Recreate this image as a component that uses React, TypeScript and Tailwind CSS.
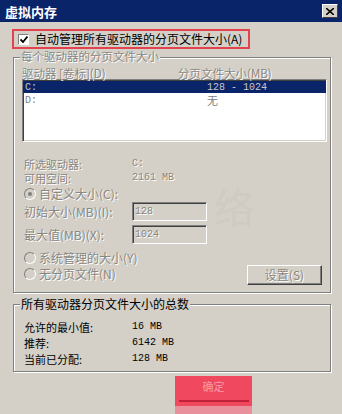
import React from "react";

const dim = "text-[#8a877f] [text-shadow:1px_1px_0_#fff]";
const sunken =
  "border border-t-[#808080] border-l-[#808080] border-b-white border-r-white shadow-[inset_1px_1px_0_#404040,inset_-1px_-1px_0_#d4d0c8]";

const Radio = ({ checked }: { checked?: boolean }) => (
  <span className="relative inline-block h-[12px] w-[12px] shrink-0 rounded-full border border-t-[#808080] border-l-[#808080] border-b-white border-r-white bg-[#d4d0c8]">
    {checked && (
      <span className="absolute left-[3px] top-[3px] h-[4px] w-[4px] rounded-full bg-[#808080]" />
    )}
  </span>
);

const Row = ({ label, value }: { label: string; value: string }) => (
  <div className="flex h-[12px] items-center leading-[12px]">
    <span className="w-[108px] text-[11px]">{label}</span>
    <span className="font-['Liberation_Mono',monospace] text-[10px]">{value}</span>
  </div>
);

const App = () => {
  return (
    <div className="relative h-[414px] w-[342px] overflow-hidden bg-[#d4d0c8] font-['Noto_Sans_CJK_SC',sans-serif] text-[12px] text-black">
      {/* title bar */}
      <div className="flex h-[22px] items-center justify-between bg-[#0a246a] pl-[5px] pr-[4px]">
        <span className="text-[13px] font-bold leading-none text-white">虚拟内存</span>
        <span className="flex h-[14px] w-[16px] items-center justify-center border border-t-white border-l-white border-b-[#404040] border-r-[#404040] bg-[#d4d0c8]">
          <svg width="8" height="7" viewBox="0 0 8 7">
            <path d="M0 0 L8 7 M8 0 L0 7" stroke="#000" strokeWidth="1.6" />
          </svg>
        </span>
      </div>

      {/* auto manage checkbox */}
      <div className="ml-[12px] mt-[7px] flex h-[20px] w-[238px] items-center border-2 border-[#e3434e] pl-[4px]">
        <span className="flex h-[11px] w-[11px] items-center justify-center border border-t-[#808080] border-l-[#808080] border-b-white border-r-white bg-white">
          <svg width="8" height="7" viewBox="0 0 8 7">
            <path d="M0.5 3.5 L3 6 L7.5 0.5" stroke="#000" strokeWidth="1.8" fill="none" />
          </svg>
        </span>
        <span className="ml-[6px] leading-[12px]">自动管理所有驱动器的分页文件大小(A)</span>
      </div>

      {/* per-drive group */}
      <div className="relative ml-[13px] mt-[8px] h-[236px] w-[318px] border border-[#808080] shadow-[inset_1px_1px_0_#fff,1px_1px_0_#fff]">
        <span className={`absolute -top-[8px] left-[6px] bg-[#d4d0c8] px-[1px] text-[11.5px] leading-[12px] ${dim}`}>
          每个驱动器的分页文件大小
        </span>
        <div className={`ml-[8px] mt-[9px] flex h-[12px] text-[11.5px] leading-[12px] ${dim}`}>
          <span className="w-[156px]">驱动器 [卷标](D)</span>
          <span>分页文件大小(MB)</span>
        </div>
        <div className={`ml-[8px] h-[63px] w-[305px] bg-white ${sunken}`}>
          <div className="mt-[1px] flex h-[12px] items-center bg-[#0a246a] font-['Liberation_Mono',monospace] text-[10px] text-[#c8c8c8]">
            <span className="ml-[2px] w-[182px]">C:</span>
            <span>128 - 1024</span>
          </div>
          <div className="mt-[1px] flex h-[12px] items-center text-[#808080]">
            <span className="ml-[2px] w-[182px] font-['Liberation_Mono',monospace] text-[10px]">D:</span>
            <span className="text-[11px] leading-[12px]">无</span>
          </div>
        </div>

        <div className={`ml-[10px] mt-[16px] flex flex-col gap-[2px] ${dim}`}>
          <Row label="所选驱动器:" value="C:" />
          <Row label="可用空间:" value="2161 MB" />
        </div>

        <div className={`ml-[10px] mt-[4px] flex h-[12px] items-center gap-[3px] leading-[12px] ${dim}`}>
          <Radio checked />
          <span>自定义大小(C):</span>
        </div>

        <div className={`ml-[10px] mt-[2px] flex h-[19px] items-center leading-[12px] ${dim}`}>
          <span className="w-[108px]">初始大小(MB)(I):</span>
          <span className={`flex h-[19px] w-[75px] items-center pl-[2px] font-['Liberation_Mono',monospace] text-[10px] ${sunken}`}>128</span>
        </div>
        <div className={`ml-[10px] mt-[4px] flex h-[19px] items-center leading-[12px] ${dim}`}>
          <span className="w-[108px]">最大值(MB)(X):</span>
          <span className={`flex h-[19px] w-[75px] items-center pl-[2px] font-['Liberation_Mono',monospace] text-[10px] ${sunken}`}>1024</span>
        </div>

        <div className="ml-[10px] mr-[8px] mt-[8px] flex justify-between">
          <div className={`flex flex-col gap-[4px] leading-[12px] ${dim}`}>
            <div className="flex h-[12px] items-center gap-[3px]">
              <Radio />
              <span>系统管理的大小(Y)</span>
            </div>
            <div className="flex h-[12px] items-center gap-[3px]">
              <Radio />
              <span>无分页文件(N)</span>
            </div>
          </div>
          <span className={`mt-[13px] flex h-[20px] w-[75px] items-center justify-center border border-t-white border-l-white border-b-[#404040] border-r-[#404040] shadow-[inset_-1px_-1px_0_#808080] leading-[12px] ${dim}`}>
            设置(S)
          </span>
        </div>
      </div>

      {/* totals group */}
      <div className="relative ml-[13px] mt-[11px] h-[68px] w-[318px] border border-[#808080] shadow-[inset_1px_1px_0_#fff,1px_1px_0_#fff]">
        <span className="absolute -top-[7px] left-[6px] bg-[#d4d0c8] px-[1px] leading-[12px]">
          所有驱动器分页文件大小的总数
        </span>
        <div className="ml-[10px] mt-[16px] flex flex-col gap-[4px]">
          <Row label="允许的最小值:" value="16 MB" />
          <Row label="推荐:" value="6142 MB" />
          <Row label="当前已分配:" value="128 MB" />
        </div>
      </div>

      {/* masked OK button */}
      <div className="ml-[175px] mt-[4px] flex h-[38px] w-[77px] flex-col items-center bg-[#f0485e] pt-[4px]">
        <span className="text-[11px] leading-[12px] text-[#f79aa6]">确定</span>
        <span className="mt-[8px] h-[2px] w-[70px] bg-[#c02038]" />
        <span className="mt-[4px] h-[8px] w-full bg-[#e8909c]" />
      </div>

      {/* watermark */}
      <div className="pointer-events-none absolute left-[214px] top-[186px] text-[40px] leading-none text-[#cdc9c1] opacity-60">
        络
      </div>
    </div>
  );
};

export default App;
